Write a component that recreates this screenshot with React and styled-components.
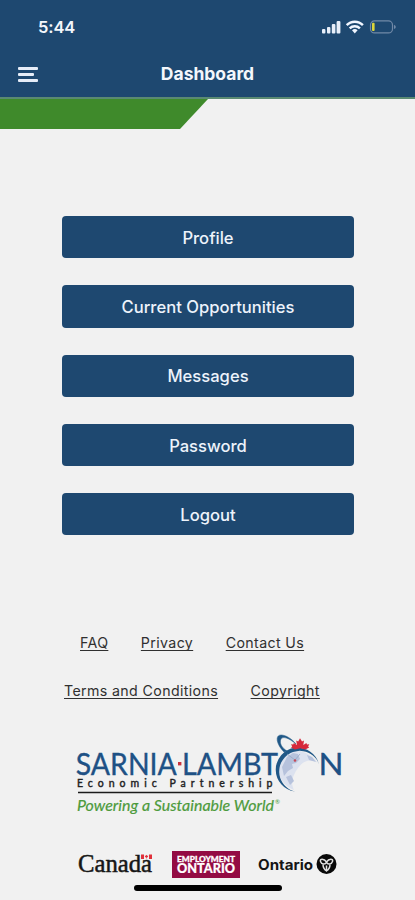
import React from "react";
import styled, { createGlobalStyle } from "styled-components";

const GlobalStyle = createGlobalStyle`
  * {
    box-sizing: border-box;
  }
  body {
    margin: 0;
    background: #f1f1f1;
    font-family: Inter, "Liberation Sans", sans-serif;
  }
`;

const Screen = styled.div`
  width: 415px;
  height: 900px;
  display: flex;
  flex-direction: column;
  background: #f1f1f1;
  overflow: hidden;
`;

const Header = styled.header`
  height: 99px;
  flex: none;
  background: #1e4870;
  border-bottom: 2px solid #5a8a72;
  color: #f4f7fc;
`;

const StatusBar = styled.div`
  height: 54px;
  display: flex;
  align-items: center;
  justify-content: space-between;
  padding: 0 19px 0 38px;
`;

const Time = styled.span`
  font-size: 16.5px;
  font-weight: 600;
  letter-spacing: -0.1px;
`;

const TitleBar = styled.div`
  height: 40px;
  display: grid;
  grid-template-columns: 60px 1fr 60px;
  align-items: center;
`;

const MenuButton = styled.button`
  width: 20px;
  height: 15px;
  margin-left: 18px;
  padding: 0;
  border: 0;
  background: none;
  display: flex;
  flex-direction: column;
  justify-content: space-between;
`;

const MenuLine = styled.span`
  display: block;
  width: ${(props) => props.$width}px;
  height: 3px;
  border-radius: 1px;
  background: #e6edf8;
`;

const Title = styled.h1`
  margin: 0;
  text-align: center;
  font-size: 17.5px;
  line-height: 20px;
  font-weight: 700;
`;

const Banner = styled.div`
  width: 208px;
  height: 30px;
  flex: none;
  background: #3f8a2b;
  clip-path: polygon(0 0, 100% 0, 180px 100%, 0 100%);
`;

const Menu = styled.nav`
  display: flex;
  flex-direction: column;
  gap: 27px;
  margin: 87px 61px 0 62px;
`;

const MenuItem = styled.button`
  height: 42.3px;
  padding: 1px 0 0;
  border: 0;
  border-radius: 4px;
  background: #1e4870;
  color: #edf3fb;
  font-family: inherit;
  font-size: 16.6px;
  font-weight: 500;
  line-height: 20px;
`;

const Links = styled.div`
  display: flex;
  flex-direction: column;
  gap: 28px;
  margin-top: 98px;
`;

const LinkRow = styled.div`
  display: flex;
  gap: 32.5px;
  padding-left: ${(props) => props.$left}px;
`;

const FooterLink = styled.a`
  color: #303030;
  font-size: 14.2px;
  line-height: 20px;
  letter-spacing: 0.37px;
  text-decoration: underline;
  text-decoration-thickness: 1px;
  text-underline-offset: 2px;
  text-decoration-skip-ink: none;
  white-space: nowrap;
`;

const BrandLogo = styled.svg`
  display: block;
  flex: none;
  width: 275px;
  height: 90px;
  margin: 29px 0 0 72px;
`;

const Partners = styled.div`
  height: 28px;
  display: flex;
  align-items: center;
  margin: 30px 0 0 78px;
`;

const CanadaLogo = styled.svg`
  width: 76px;
  height: 28px;
`;

const EmploymentBadge = styled.svg`
  width: 68px;
  height: 27px;
  margin-left: 18px;
`;

const OntarioLogo = styled.svg`
  width: 80px;
  height: 28px;
  margin-left: 18px;
`;

const HomeIndicator = styled.div`
  width: 148px;
  height: 6px;
  flex: none;
  margin: 7px auto 0;
  border-radius: 3px;
  background: #000;
`;

const StatusIcons = () => (
  <svg width="76" height="16" viewBox="0 0 76 16">
    <g fill="#e8effa">
      <rect x="2" y="10" width="3.4" height="4.5" rx="1" />
      <rect x="7" y="8" width="3.4" height="6.5" rx="1" />
      <rect x="11.8" y="5" width="3.6" height="9.5" rx="1" />
      <rect x="16.6" y="2" width="3.8" height="12.5" rx="1" />
    </g>
    <g fill="none" stroke="#f1f6ff" strokeWidth="2.4">
      <path d="M26.7 6.2a11.2 11.2 0 0 1 16.2 0" />
      <path d="M29.7 9.4a7.2 7.2 0 0 1 10.2 0" />
    </g>
    <path d="M32 11.3a4 4 0 0 1 5.6 0L34.8 14.5z" fill="#f1f6ff" />
    <rect x="50.5" y="1.9" width="22" height="12" rx="4" fill="none" stroke="#7189a7" strokeWidth="1.2" />
    <path d="M74 5.7q1.8.7 1.8 2.2T74 10.1z" fill="#7189a7" />
    <rect x="52" y="3.7" width="2.6" height="8.4" rx="1" fill="#ddd638" />
  </svg>
);

// coordinates start at the left edge of the wordmark box
const SarniaLambton = () => (
  <BrandLogo viewBox="72 730 275 90" role="img" aria-label="Sarnia-Lambton Economic Partnership">
    <g fill="#1e5185" stroke="#1e5185" strokeWidth=".35" fontFamily="Lato, sans-serif" fontSize="30">
      <text x="75.8" y="775" textLength="101" lengthAdjust="spacingAndGlyphs">SARNIA</text>
      <text x="182" y="775" textLength="96" lengthAdjust="spacingAndGlyphs">LAMBT</text>
      <text x="318.5" y="775" textLength="25" lengthAdjust="spacingAndGlyphs">N</text>
    </g>
    <rect x="178" y="762" width="3.4" height="3.4" fill="#c8323d" />
    <text x="77" y="787" fill="#222" stroke="#222" strokeWidth=".4" fontFamily="Lato, sans-serif" fontSize="10.5" fontWeight="400" textLength="195.5">Economic Partnership</text>
    <path d="M78 792.5H272" stroke="#1c1c1c" strokeWidth="1.6" />
    <text x="77" y="811" fill="#4c9a3c" stroke="#4c9a3c" strokeWidth=".2" fontFamily="Lato, sans-serif" fontSize="16" fontStyle="italic" textLength="197" lengthAdjust="spacingAndGlyphs">Powering a Sustainable World</text>
    <text x="275" y="804" fill="#4c9a3c" fontFamily="Lato, sans-serif" fontSize="6">®</text>
    <path d="M294 790C280 785 275 770 281 759S304 746 318 763C310 758 303 761 298 768S290 782 294 790Z" fill="#dce2ef" />
    <path d="M287 757l6-4 5 1 2 5-4 4-4 1 1 4-5 3-4 5-2-9zM307 755l5 2 4 5-7-2zM286 777l5-2 3 6-4 4z" fill="#b6c2dc" />
    <path d="M295 791.5A22 22 0 1 1 319 764A20.6 20.6 0 1 0 295 791.5Z" fill="#205887" />
    <path d="M284 752C276 744 275 735 281 735C286 735 292 739 296 744C289 738 283 736 281 739C279 743 282 748 287 751Z" fill="#205887" stroke="#205887" strokeWidth=".5" />
    <path d="M287 754l8 6M295 760l5-6" stroke="#8ea3c2" strokeWidth=".7" />
    <circle cx="295" cy="760.5" r="1.3" fill="#c54b59" />
    <path d="M300 738.3l2 3.2 2-1-.7 4.5 3.1-2 .6 1.6 2.3-.3-1.2 2.2 1.1.9-4 2.1-5-1.3-5.3 1.2-3.9-2 1.2-.9-1.2-2.2 2.2.3.7-1.6 3.1 2-.8-4.5 2 1z" fill="#d6283b" />
  </BrandLogo>
);

const Canada = () => (
  <CanadaLogo viewBox="0 0 76 28" role="img" aria-label="Canada">
    <text x="0" y="21.5" fill="#161616" stroke="#161616" strokeWidth=".5" fontFamily="'Liberation Serif', serif" fontSize="25" textLength="74" lengthAdjust="spacingAndGlyphs">Canada</text>
    <path d="M63 4.5h3v4.5h-3zM71 4.5h3V9h-3zM68.5 4.7l.8 1 1 .1-.6 1.5-.9.2v1h-.6v-1l-.9-.2-.6-1.5 1-.1z" fill="#e0303a" />
  </CanadaLogo>
);

const EmploymentOntario = () => (
  <EmploymentBadge viewBox="0 0 68 27" role="img" aria-label="Employment Ontario">
    <rect width="68" height="27" fill="#930b43" />
    <g fill="#fff" stroke="#fff" fontFamily="Lato, sans-serif" fontWeight="900">
      <text x="5" y="10.8" fontSize="7.8" strokeWidth=".3" textLength="58" lengthAdjust="spacingAndGlyphs">EMPLOYMENT</text>
      <text x="5" y="21.8" fontSize="12.5" strokeWidth=".2" textLength="58" lengthAdjust="spacingAndGlyphs">ONTARIO</text>
    </g>
  </EmploymentBadge>
);

const Ontario = () => (
  <OntarioLogo viewBox="0 0 80 28" role="img" aria-label="Ontario">
    <text x="0" y="20" fill="#151515" fontFamily="Inter, sans-serif" fontSize="14" fontWeight="700" textLength="55" lengthAdjust="spacingAndGlyphs">Ontario</text>
    <circle cx="68.5" cy="14" r="10" fill="#090909" />
    <g fill="none" stroke="#e1e1e1" strokeWidth="1.5">
      <path d="M68.5 12C66 8 61.5 8.5 62.5 11.5S67.5 15 68.5 12C71 8 75.5 8.5 74.5 11.5S69.5 15 68.5 12Z" />
      <path d="M65 14.5Q65 18.5 68.5 21Q72 18.5 72 14.5M68.5 15.5V20" />
    </g>
  </OntarioLogo>
);

const menuItems = ["Profile", "Current Opportunities", "Messages", "Password", "Logout"];

const App = () => {
  return (
    <Screen>
      <GlobalStyle />
      <Header>
        <StatusBar>
          <Time>5:44</Time>
          <StatusIcons />
        </StatusBar>
        <TitleBar>
          <MenuButton aria-label="Menu">
            <MenuLine $width={19.5} />
            <MenuLine $width={15.5} />
            <MenuLine $width={19.5} />
          </MenuButton>
          <Title>Dashboard</Title>
        </TitleBar>
      </Header>
      <Banner />
      <Menu>
        {menuItems.map((item) => (
          <MenuItem key={item}>{item}</MenuItem>
        ))}
      </Menu>
      <Links>
        <LinkRow $left={80}>
          <FooterLink>FAQ</FooterLink>
          <FooterLink>Privacy</FooterLink>
          <FooterLink>Contact Us</FooterLink>
        </LinkRow>
        <LinkRow $left={64}>
          <FooterLink>Terms and Conditions</FooterLink>
          <FooterLink>Copyright</FooterLink>
        </LinkRow>
      </Links>
      <SarniaLambton />
      <Partners>
        <Canada />
        <EmploymentOntario />
        <Ontario />
      </Partners>
      <HomeIndicator />
    </Screen>
  );
};

export default App;
